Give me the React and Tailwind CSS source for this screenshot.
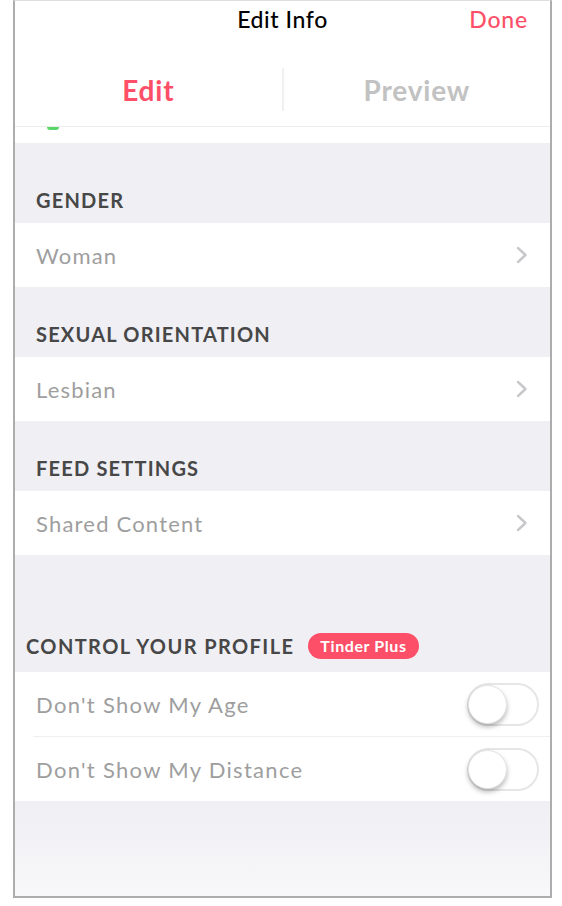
import React from 'react'

const font = { fontFamily: 'Lato, "Open Sans", sans-serif' }

function Chevron() {
  return (
    <svg width="14" height="18" viewBox="0 0 14 18" className="shrink-0">
      <path d="M3 2 L10.5 9 L3 16" fill="none" stroke="#c7c7cc" strokeWidth="2.4" strokeLinecap="round" strokeLinejoin="round" />
    </svg>
  )
}

function Toggle() {
  return (
    <div className="relative w-[72px] h-[43px] rounded-full border-2 border-[#e6e6e6] bg-white">
      <div className="absolute left-[-1px] top-[0px] w-[39px] h-[39px] rounded-full bg-white shadow-[0_3px_5px_rgba(0,0,0,0.28)] border border-[#e4e4e4]" />
    </div>
  )
}

function SectionHeader({ title, height }) {
  return (
    <div className={`flex items-end pl-[21px] pb-[8px] text-[20px] font-bold tracking-[1.2px] text-[#474747] ${height}`}>
      {title}
    </div>
  )
}

function LinkRow({ label }) {
  return (
    <div className="flex items-center justify-between h-[64px] bg-white pl-[21px] pr-[21px]">
      <span className="text-[22px] tracking-[1.2px] text-[#9e9e9e]">{label}</span>
      <Chevron />
    </div>
  )
}

function ToggleRow({ label }) {
  return (
    <div className="flex items-center justify-between h-[64px] pl-[21px] pr-[11px]">
      <span className="text-[22px] tracking-[1.3px] text-[#9e9e9e]">{label}</span>
      <Toggle />
    </div>
  )
}

export default function App() {
  return (
    <div className="w-[562px] h-[906px] bg-white" style={font}>
      <div className="ml-[13px] w-[539px] h-[898px] border-x-2 border-b-2 border-t border-t-[#dedede] border-x-[#adadad] border-b-[#adadad] flex flex-col bg-[#efeff4]">
        {/* nav bar */}
        <div className="bg-white relative h-[52px] flex justify-center pt-[3px]">
          <span className="text-[23px] tracking-[0.6px] text-black font-medium leading-[30px]">Edit Info</span>
          <span className="absolute right-[22px] top-[3px] text-[23px] tracking-[0.8px] text-[#fd5068] font-medium leading-[30px]">Done</span>
        </div>

        {/* tabs */}
        <div className="bg-white flex h-[74px] border-b border-[#ececec]">
          <div className="flex-1 flex items-center justify-center text-[28px] tracking-[0.8px] font-bold text-[#fd5068]">Edit</div>
          <div className="w-[2px] bg-[#f0f0f0] my-[15px]" />
          <div className="flex-1 flex items-center justify-center text-[28px] tracking-[0.8px] font-bold text-[#c2c2c2]">Preview</div>
        </div>

        {/* scrolled content remnant */}
        <div className="bg-white h-[16px] pl-[32px]">
          <div className="w-[12px] h-[3px] rounded-b-full bg-[#5ad56a]" />
        </div>

        <SectionHeader title="GENDER" height="h-[80px]" />
        <LinkRow label="Woman" />

        <SectionHeader title="SEXUAL ORIENTATION" height="h-[70px]" />
        <LinkRow label="Lesbian" />

        <SectionHeader title="FEED SETTINGS" height="h-[70px]" />
        <LinkRow label="Shared Content" />

        <div className="flex items-end h-[117px] pl-[11px] pb-[13px] gap-[14px]">
          <span className="text-[20px] font-bold tracking-[1.4px] text-[#474747] leading-[26px]">CONTROL YOUR PROFILE</span>
          <span className="h-[26px] px-[12px] rounded-full bg-[#fd5068] text-white text-[16px] tracking-[0.6px] font-bold flex items-center">Tinder Plus</span>
        </div>

        <div className="bg-white">
          <ToggleRow label="Don't Show My Age" />
          <div className="ml-[18px] h-px bg-[#efefef]" />
          <ToggleRow label="Don't Show My Distance" />
        </div>

        <div className="flex-1 bg-gradient-to-b from-[#efeff4] to-[#f8f8fa]" />
      </div>
    </div>
  )
}
